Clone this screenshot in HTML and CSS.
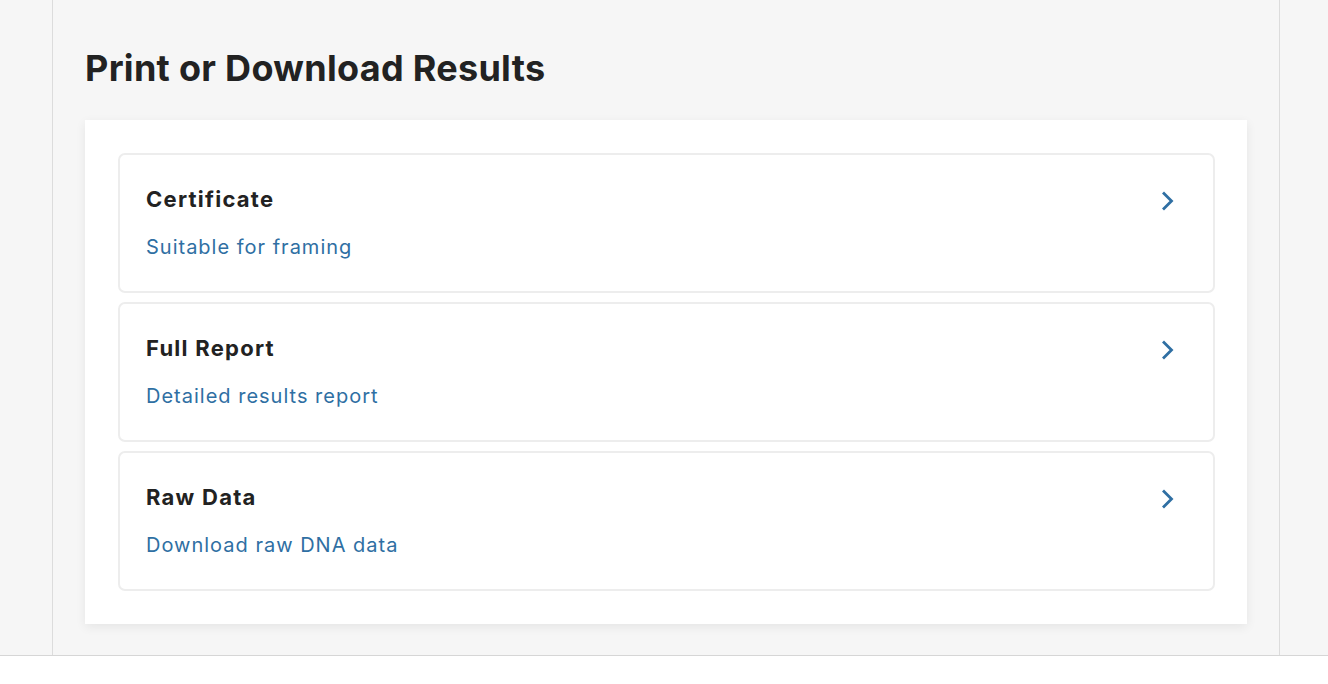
FILE: index.html
```html
<!DOCTYPE html>
<html lang="en">
<head>
<meta charset="utf-8">
<title>Print or Download Results</title>
<link rel="stylesheet" href="styles.css">
</head>
<body>
<div class="page">
  <main class="main">
    <h1 class="title">Print or Download Results</h1>
    <section class="panel">
      <a class="option" href="#">
        <div class="option-text">
          <div class="option-name">Certificate</div>
          <div class="option-desc">Suitable for framing</div>
        </div>
        <svg class="chev" width="14" height="20" viewBox="0 0 14 20"><path d="M3 2.5 L10.5 10 L3 17.5" fill="none" stroke="currentColor" stroke-width="2.8" stroke-linecap="square"/></svg>
      </a>
      <a class="option" href="#">
        <div class="option-text">
          <div class="option-name">Full Report</div>
          <div class="option-desc">Detailed results report</div>
        </div>
        <svg class="chev" width="14" height="20" viewBox="0 0 14 20"><path d="M3 2.5 L10.5 10 L3 17.5" fill="none" stroke="currentColor" stroke-width="2.8" stroke-linecap="square"/></svg>
      </a>
      <a class="option" href="#">
        <div class="option-text">
          <div class="option-name">Raw Data</div>
          <div class="option-desc">Download raw DNA data</div>
        </div>
        <svg class="chev" width="14" height="20" viewBox="0 0 14 20"><path d="M3 2.5 L10.5 10 L3 17.5" fill="none" stroke="currentColor" stroke-width="2.8" stroke-linecap="square"/></svg>
      </a>
    </section>
  </main>
</div>
</body>
</html>
```

FILE: styles.css
```css
html, body {
  margin: 0;
  padding: 0;
  background: #ffffff;
  font-family: Inter, "Noto Sans", "Liberation Sans", sans-serif;
  color: #222222;
}

.page {
  background: #f6f6f6;
  border-bottom: 1px solid #d6d6d6;
  height: 656px;
  box-sizing: border-box;
}

.main {
  margin-left: 52px;
  width: 1228px;
  height: 100%;
  border-left: 1px solid #dcdcdc;
  border-right: 1px solid #dcdcdc;
  padding: 46px 32px 0 32px;
  box-sizing: border-box;
}

.title {
  margin: 0 0 30px 0;
  font-size: 36px;
  line-height: 44px;
  font-weight: 700;
  color: #222222;
  letter-spacing: 0.3px;
}

.panel {
  background: #ffffff;
  box-shadow: 0 3px 10px rgba(0, 0, 0, 0.07);
  padding: 33px 32px 33px 33px;
  display: flex;
  flex-direction: column;
  gap: 9px;
}

.option {
  display: flex;
  align-items: flex-start;
  justify-content: space-between;
  border: 2px solid #ededed;
  border-radius: 7px;
  padding: 30px 38px 0 26px;
  height: 140px;
  box-sizing: border-box;
  text-decoration: none;
  color: inherit;
}

.option-name {
  font-size: 22px;
  line-height: 28px;
  font-weight: 700;
  color: #222222;
  letter-spacing: 1.25px;
}

.option-desc {
  margin-top: 21px;
  font-size: 20px;
  line-height: 26px;
  color: #2f6fa3;
  letter-spacing: 1px;
}

.chev {
  color: #2f6fa3;
  margin-top: 6px;
  display: block;
}
```
